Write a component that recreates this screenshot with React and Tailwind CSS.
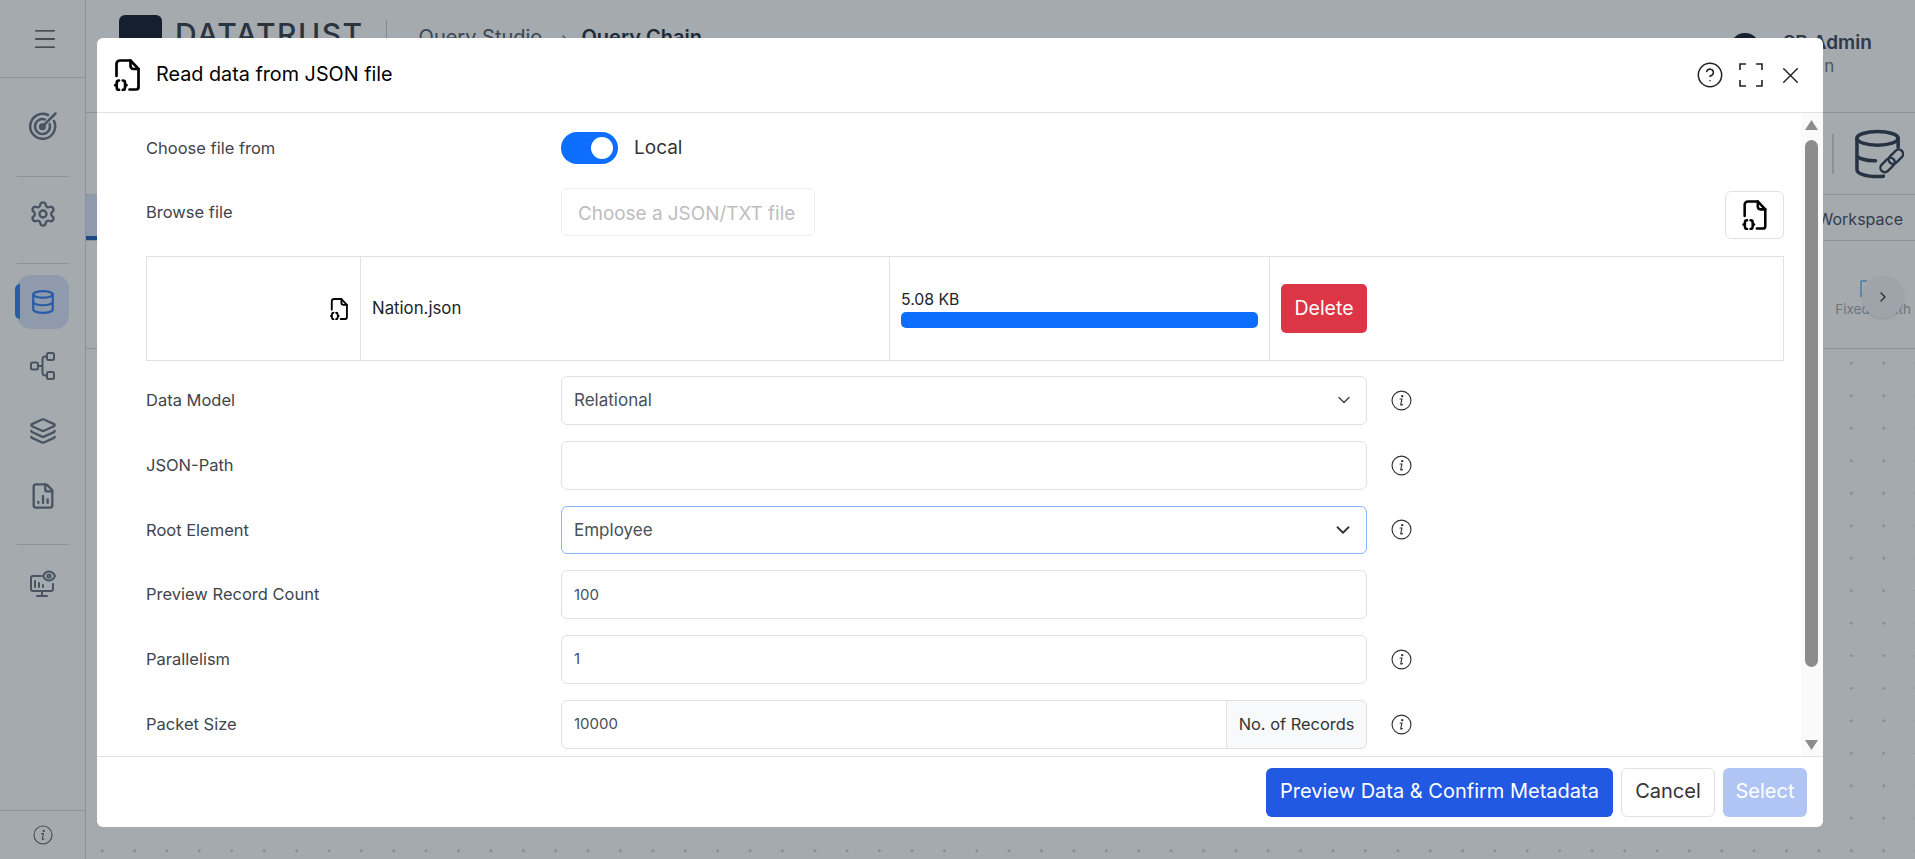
import React from 'react'
import { CircleHelp, X, ChevronDown, ChevronRight, Settings, Database, Layers, FileChartColumn, Menu } from 'lucide-react'

const JsonFileIcon = ({ className }) => (
  <svg viewBox="0 0 26 32" fill="none" stroke="currentColor" strokeWidth="2.700" strokeLinecap="round" strokeLinejoin="round" className={className}>
    <path d="M2.5 17V5a3.5 3.5 0 0 1 3.5-3.5h10.5L24.5 10v18a2.5 2.5 0 0 1-2.5 2.5h-6.5" />
    <path d="M16.5 1.5V7a3 3 0 0 0 3 3h5" />
    <path d="M5 21.5c-1.6 0-2.2.6-2.2 2v1.3c0 .9-.5 1.4-1.5 1.4 1 0 1.5.5 1.5 1.4v1.3c0 1.4.6 2 2.2 2" />
    <path d="M8.8 21.5c1.6 0 2.2.6 2.2 2v1.3c0 .9.5 1.4 1.5 1.4-1 0-1.5.5-1.5 1.4v1.3c0 1.4-.6 2-2.2 2" />
  </svg>
)

const InfoIcon = ({ className }) => (
  <svg viewBox="0 0 20 20" fill="none" stroke="currentColor" strokeWidth="1.1" strokeLinecap="round" className={className}>
    <circle cx="10" cy="10" r="9" />
    <path d="M8.6 8.6h1.8l-1.1 5.2c-.1.6.4.8 1.6.1" />
    <circle cx="10.7" cy="5.9" r="0.55" fill="currentColor" />
  </svg>
)

const ExpandIcon = ({ className }) => (
  <svg viewBox="0 0 24 24" fill="none" stroke="currentColor" strokeWidth="1.6" className={className}>
    <path d="M1 7V1h6M17 1h6v6M23 17v6h-6M7 23H1v-6" />
  </svg>
)

const GoalIcon = ({ className }) => (
  <svg viewBox="0 0 24 24" fill="none" stroke="currentColor" strokeWidth="2" strokeLinecap="round" className={className}>
    <path d="M16 3.200A10 10 0 1 0 20.800 8" />
    <path d="M13.500 6.700A6 6 0 1 0 17.300 10.500" />
    <circle cx="11.500" cy="12.500" r="1.800" />
    <path d="M11.500 12.500L22 2" />
  </svg>
)

const TreeIcon = ({ className }) => (
  <svg viewBox="0 0 25 28" fill="none" stroke="currentColor" strokeWidth="2" strokeLinejoin="round" className={className}>
    <rect x="1" y="10.5" width="7" height="7" rx="1.5" />
    <rect x="17" y="1" width="7" height="7" rx="1.5" />
    <rect x="17" y="20" width="7" height="7" rx="1.5" />
    <path d="M8 14h4.5M17 4.5h-2a2.5 2.5 0 0 0-2.5 2.5v14a2.5 2.5 0 0 0 2.5 2.5h2" />
  </svg>
)

const MonitorEyeIcon = ({ className }) => (
  <svg viewBox="0 0 26 28" fill="none" stroke="currentColor" strokeWidth="2" strokeLinecap="round" strokeLinejoin="round" className={className}>
    <path d="M11 6H3a2 2 0 0 0-2 2v11a2 2 0 0 0 2 2h18a2 2 0 0 0 2-2v-5" />
    <path d="M12 21v4M7 26h10M5 17v-6M9 17v-4M13 17v-2" />
    <path d="M13 6c1.5-3 3.500-4.500 6-4.500S23.500 3 25 6c-1.500 3-3.500 4.500-6 4.500S14.500 9 13 6z" />
    <circle cx="19" cy="6" r="1.600" />
  </svg>
)

const DbLinkIcon = ({ className }) => (
  <svg viewBox="0 0 50 50" fill="none" stroke="currentColor" strokeWidth="3.600" strokeLinecap="round" strokeLinejoin="round" className={className}>
    <ellipse cx="23" cy="9" rx="21" ry="7" />
    <path d="M2 9v32c0 4 9 7 21 7 2 0 4 0 6-.4M44 9v9M2 26c0 3 8 6 18 6h1" />
    <g transform="rotate(-45 37.500 32)" strokeWidth="2.400">
      <rect x="23" y="27.500" width="17" height="9" rx="4.500" />
      <rect x="35" y="27.500" width="17" height="9" rx="4.500" />
    </g>
  </svg>
)

const Row = ({ label, info, children }) => (
  <div className="flex items-center h-[48.8px]">
    <span className="w-[415px] shrink-0 text-[16.500px] text-[#3f454b]">{label}</span>
    <div className="w-[806px] h-full flex">{children}</div>
    {info && <InfoIcon className="w-[21px] h-[21px] ml-[24px] text-[#333]" />}
  </div>
)

const inputCls = 'flex-1 min-w-0 flex items-center justify-between px-[12px] border border-[#dee2e6] rounded-[6px] text-[#495057]'

export default function App() {
  return (
    <div className="relative h-screen w-full overflow-hidden bg-white font-['Inter',sans-serif]">
      {/* page behind the dialog */}
      <div className="flex h-full">
        <aside className="w-[86px] shrink-0 flex flex-col border-r border-[#d5d8dc] text-[#64707f]">
          <div className="h-[78px] shrink-0 flex items-center justify-center pl-[5px] border-b border-[#d5d8dc]">
            <Menu className="w-[28px] h-[28px] text-[#333]" strokeWidth={1.200} />
          </div>
          <div className="flex flex-col items-center flex-1 pt-[33px]">
            <GoalIcon className="w-[30px] h-[30px]" />
            <div className="w-[52px] h-px bg-[#d5d8dc] mt-[35px] mb-[23px]" />
            <Settings className="w-[28px] h-[28px]" strokeWidth={2} />
            <div className="w-[52px] h-px bg-[#d5d8dc] mt-[35px] mb-[11px]" />
            <div className="relative w-[52px] h-[54px] rounded-[14px] bg-[#dbe7fb] flex items-center justify-center text-[#2f7df0]">
              <span className="absolute left-[-2px] top-[9px] w-[5px] h-[35px] rounded-l-full bg-[#2f7df0]" />
              <Database className="w-[26px] h-[26px]" strokeWidth={2} />
            </div>
            <TreeIcon className="w-[25px] h-[28px] mt-[23px]" />
            <Layers className="w-[28px] h-[30px] mt-[36px]" strokeWidth={2} />
            <FileChartColumn className="w-[28px] h-[30px] mt-[35px]" strokeWidth={2} />
            <div className="w-[52px] h-px bg-[#d5d8dc] mt-[33px] mb-[25px]" />
            <MonitorEyeIcon className="w-[26px] h-[28px]" />
          </div>
          <div className="h-[49px] shrink-0 flex items-center justify-center border-t border-[#d5d8dc]">
            <InfoIcon className="w-[20px] h-[22px] text-[#5c6670]" />
          </div>
        </aside>

        <main className="flex-1 min-w-0 flex flex-col">
          <header className="h-[113px] shrink-0 border-b border-[#d5d8dc] flex items-start pl-[33px] pt-[15px]">
            <div className="w-[43px] h-[43px] rounded-[6px] bg-[#111827] shrink-0" />
            <span className="ml-[13px] mt-[1px] text-[30px] leading-[36px] font-medium tracking-[1.500px] text-[#333a44]">DATATRUST</span>
            <div className="w-px h-[40px] bg-[#c3c7cc] ml-[22px] mt-[5px]" />
            <span className="ml-[32px] mt-[7px] text-[20px] leading-[30px] text-[#4b5563]">Query Studio</span>
            <ChevronRight className="w-[16px] h-[16px] mt-[17px] ml-[15px] text-[#6b7280]" />
            <span className="ml-[8px] mt-[7px] text-[20px] leading-[30px] font-semibold text-[#1f2937]">Query Chain</span>
            <div className="ml-auto flex w-[141px] mt-[18px] mr-[44px]">
              <div className="w-[30px] h-[30px] shrink-0 rounded-full bg-[#111827] mr-[23px]" />
              <div className="leading-none whitespace-nowrap">
                <p className="text-[19px] leading-[20px] font-semibold text-[#3a4452]">SB Admin</p>
                <p className="text-[17px] mt-[5px] text-[#6b7280]">Admin</p>
              </div>
            </div>
          </header>
          <div className="h-[82px] shrink-0 border-b border-[#d5d8dc] flex items-center justify-end pr-[11px]">
            <div className="w-[2px] h-[40px] bg-[#d5d8dc] mr-[21px]" />
            <DbLinkIcon className="w-[49px] h-[50px] text-[#2d3a4b]" />
          </div>
          <div className="h-[46px] shrink-0 border-b border-[#d5d8dc] flex items-center justify-between pr-[12px]">
            <div className="w-[30px] h-full bg-[#dbe7fb] border-b-[4px] border-[#1d5fb8]" />
            <span className="text-[16px] mt-[3px] text-[#3f4a58]">Workspace</span>
          </div>
          <div className="h-[108px] shrink-0 border-b border-[#d5d8dc] flex items-center justify-end relative pr-[4px]">
            <div className="flex flex-col items-center mt-[8px]">
              <svg viewBox="0 0 27 20" fill="none" stroke="#60b4f5" strokeWidth="1.500" className="w-[27px] h-[20px]">
                <path d="M1 20V4M1 4h6M26 20V2" />
              </svg>
              <span className="text-[13.500px] leading-[24px] text-[#a0a7b0] whitespace-nowrap">Fixed Width</span>
            </div>
            <div className="absolute right-[11px] top-[35px] w-[42px] h-[42px] rounded-full bg-[#f5f6f7] shadow flex items-center justify-center">
              <ChevronRight className="w-[16px] h-[16px] text-[#333]" />
            </div>
          </div>
          <div className="flex-1 bg-[radial-gradient(circle,#c5c9ce_1px,transparent_1.500px)] bg-[size:32.400px_32.500px] bg-[position:0px_-2px]" />
        </main>
      </div>

      {/* dialog backdrop */}
      <div className="absolute inset-0 bg-[#1f2a37]/40" />

      <div className="absolute left-[97px] top-[38px] w-[1726px] h-[789px] rounded-[6px] bg-white flex flex-col overflow-hidden">
        <div className="h-[75px] shrink-0 flex items-center border-b border-[#dee2e6] pl-[17px] pr-[19px]">
          <JsonFileIcon className="w-[26px] h-[32px] text-black" />
          <h5 className="ml-[16px] text-[19.800px] text-black">Read data from JSON file</h5>
          <CircleHelp className="ml-auto w-[28px] h-[28px] text-[#222]" strokeWidth={1.300} />
          <ExpandIcon className="ml-[15px] w-[24px] h-[24px] text-[#222]" />
          <X className="ml-[14px] w-[27px] h-[27px] text-[#222]" strokeWidth={1.300} />
        </div>

        <div className="flex-1 min-h-0 flex overflow-hidden">
          <div className="flex-1 min-w-0 pl-[49px] pr-[17px] pt-[19px]">
            <div className="flex items-center h-[32px]">
              <span className="w-[415px] shrink-0 text-[16.500px] text-[#3f454b]">Choose file from</span>
              <div className="w-[57px] h-[32px] rounded-full bg-[#0d6efd] flex items-center justify-end pr-[5px]">
                <span className="w-[22px] h-[22px] rounded-full bg-white" />
              </div>
              <span className="ml-[16px] mt-[1px] text-[19px] text-[#333]">Local</span>
            </div>

            <div className="flex items-start h-[49px] mt-[24px]">
              <span className="w-[415px] shrink-0 text-[16.500px] text-[#3f454b] leading-[48px]">Browse file</span>
              <div className="w-[254px] h-[48px] border border-[#eeeeee] rounded-[6px] flex items-center pl-[16px] pt-[4px] text-[18.900px] text-[#bdbdbd] whitespace-nowrap">Choose a JSON/TXT file</div>
              <button className="ml-auto mt-[3px] w-[59px] h-[48px] border border-[#dee2e6] rounded-[6px] flex items-center justify-center">
                <JsonFileIcon className="w-[25px] h-[30px] text-black" />
              </button>
            </div>

            <div className="mt-[19px] h-[105px] border border-[#dee2e6] grid grid-cols-[214px_529px_380px_1fr]">
              <div className="flex items-center justify-end pr-[12px] border-r border-[#dee2e6]">
                <JsonFileIcon className="w-[18px] h-[22px] text-black" />
              </div>
              <div className="flex items-center pl-[11px] border-r border-[#dee2e6] text-[16.800px] text-[#212529]">Nation.json</div>
              <div className="flex flex-col justify-center px-[11px] border-r border-[#dee2e6]">
                <span className="text-[15.800px] leading-[22px] text-[#212529]">5.08 KB</span>
                <div className="mt-[1px] h-[16px] rounded-[5px] bg-[#0d6efd]" />
              </div>
              <div className="flex items-center pl-[11px]">
                <button className="w-[86px] h-[49px] rounded-[5px] bg-[#dc3545] text-white text-[19.500px]">Delete</button>
              </div>
            </div>

            <div className="mt-[15px] flex flex-col gap-4">
              <Row label="Data Model" info>
                <div className={inputCls + ' text-[17px]'}>Relational<ChevronDown className="w-[20px] h-[20px] text-[#444]" strokeWidth={1.700} /></div>
              </Row>
              <Row label="JSON-Path" info>
                <div className={inputCls} />
              </Row>
              <Row label="Root Element" info>
                <div className="flex-1 min-w-0 flex items-center justify-between px-[12px] pt-[1px] border border-[#86b7fe] rounded-[6px] text-[17px] text-[#495057]">
                  Employee<ChevronDown className="w-[22px] h-[22px] text-[#333]" strokeWidth={2} />
                </div>
              </Row>
              <Row label="Preview Record Count">
                <div className={inputCls + ' text-[15px]'}>100</div>
              </Row>
              <Row label="Parallelism" info>
                <div className={inputCls + ' text-[15px]'}>1</div>
              </Row>
              <Row label="Packet Size" info>
                <div className="flex-1 min-w-0 flex items-center pl-[12px] border border-[#dee2e6] rounded-l-[6px] text-[15px] text-[#495057]">10000</div>
                <div className="w-[141px] -ml-px flex items-center justify-center border border-[#dee2e6] rounded-r-[6px] bg-[#f8f9fa] text-[16.400px] text-[#333] whitespace-nowrap">No. of Records</div>
              </Row>
            </div>
          </div>

          {/* scrollbar */}
          <div className="w-[22px] shrink-0 bg-[#fafafa] pl-[4px] pr-[5px] pt-[7px] flex flex-col">
            <svg viewBox="0 0 13 10" className="w-[13px] h-[10px] shrink-0 text-[#8c8c8c]" fill="currentColor"><path d="M6.500 0L13 10H0z" /></svg>
            <div className="h-[527px] mt-[10px] shrink-0 rounded-full bg-[#8c8c8c]" />
            <svg viewBox="0 0 13 10" className="w-[13px] h-[10px] shrink-0 mt-[73px] text-[#8c8c8c]" fill="currentColor"><path d="M0 0h13L6.500 10z" /></svg>
          </div>
        </div>

        <div className="h-[71px] shrink-0 border-t border-[#dee2e6] flex items-center justify-end gap-[8px] pr-[16px] text-[20px]">
          <button className="w-[347px] h-[49px] pb-[2px] rounded-[6px] bg-[#2259e3] text-white whitespace-nowrap">Preview Data &amp; Confirm Metadata</button>
          <button className="w-[94px] h-[49px] pb-[2px] rounded-[6px] border border-[#dee2e6] text-[#333]">Cancel</button>
          <button className="w-[84px] h-[49px] pb-[2px] rounded-[6px] bg-[#b1c5f5] text-white">Select</button>
        </div>
      </div>
    </div>
  )
}
